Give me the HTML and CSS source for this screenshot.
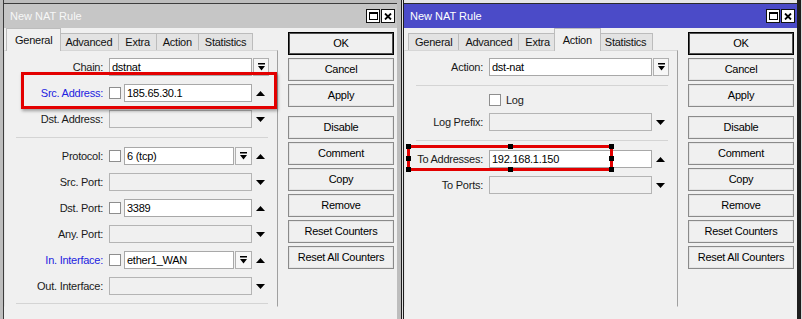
FILE: index.html
```html
<!DOCTYPE html>
<html>
	<head>
		<title>New NAT Rule</title>
		<link rel="stylesheet" href="styles.css">
	</head>
	<body>
		<div class="screen">
			<!-- inactive window: General tab -->
			<div class="win win-left">
				<div class="titlebar">
					<span>New NAT Rule</span>
					<span class="tbtns">
						<span class="tbtn"><svg width="9" height="8" viewBox="0 0 9 8"><rect x=".5" y=".5" width="8" height="7" fill="none" stroke="#000"/><rect width="9" height="2"/></svg></span>
						<span class="tbtn"><svg width="8" height="7" viewBox="0 0 8 7"><path d="M1 .5l6 6M7 .5l-6 6" stroke="#000" stroke-width="1.8"/></svg></span>
					</span>
				</div>
				<div class="win-body">
					<div class="tabbox">
						<div class="tabs">
							<span class="tab active">General</span>
							<span class="tab">Advanced</span>
							<span class="tab">Extra</span>
							<span class="tab">Action</span>
							<span class="tab">Statistics</span>
						</div>
						<div class="panel">
							<div class="row">
								<span class="lbl">Chain:</span>
								<div class="field"><span class="box">dstnat</span></div>
								<span class="arrow"><span class="dd"><svg width="7" height="8" viewBox="0 0 7 8"><path d="M0 0h7v1.5H0zM0 3h7L3.5 7.5z"/></svg></span></span>
							</div>
							<div class="row">
								<span class="lbl blue">Src. Address:</span>
								<div class="field"><span class="check"></span><span class="box">185.65.30.1</span></div>
								<span class="arrow"><svg width="9" height="5" viewBox="0 0 9 5"><path d="M0 5h9L4.5 0z"/></svg></span>
							</div>
							<div class="row">
								<span class="lbl">Dst. Address:</span>
								<div class="field"><span class="box empty"></span></div>
								<span class="arrow"><svg width="9" height="5" viewBox="0 0 9 5"><path d="M0 0h9L4.5 5z"/></svg></span>
							</div>
							<div class="sep"></div>
							<div class="row">
								<span class="lbl">Protocol:</span>
								<div class="field"><span class="check"></span><span class="combo"><span class="box">6 (tcp)</span><span class="dd"><svg width="7" height="8" viewBox="0 0 7 8"><path d="M0 0h7v1.5H0zM0 3h7L3.5 7.5z"/></svg></span></span></div>
								<span class="arrow"><svg width="9" height="5" viewBox="0 0 9 5"><path d="M0 5h9L4.5 0z"/></svg></span>
							</div>
							<div class="row">
								<span class="lbl">Src. Port:</span>
								<div class="field"><span class="box empty"></span></div>
								<span class="arrow"><svg width="9" height="5" viewBox="0 0 9 5"><path d="M0 0h9L4.5 5z"/></svg></span>
							</div>
							<div class="row">
								<span class="lbl">Dst. Port:</span>
								<div class="field"><span class="check"></span><span class="box">3389</span></div>
								<span class="arrow"><svg width="9" height="5" viewBox="0 0 9 5"><path d="M0 5h9L4.5 0z"/></svg></span>
							</div>
							<div class="row">
								<span class="lbl">Any. Port:</span>
								<div class="field"><span class="box empty"></span></div>
								<span class="arrow"><svg width="9" height="5" viewBox="0 0 9 5"><path d="M0 0h9L4.5 5z"/></svg></span>
							</div>
							<div class="row">
								<span class="lbl blue">In. Interface:</span>
								<div class="field"><span class="check"></span><span class="combo"><span class="box">ether1_WAN</span><span class="dd"><svg width="7" height="8" viewBox="0 0 7 8"><path d="M0 0h7v1.5H0zM0 3h7L3.5 7.5z"/></svg></span></span></div>
								<span class="arrow"><svg width="9" height="5" viewBox="0 0 9 5"><path d="M0 5h9L4.5 0z"/></svg></span>
							</div>
							<div class="row">
								<span class="lbl">Out. Interface:</span>
								<div class="field"><span class="box empty"></span></div>
								<span class="arrow"><svg width="9" height="5" viewBox="0 0 9 5"><path d="M0 0h9L4.5 5z"/></svg></span>
							</div>
							<div class="sep"></div>
						</div>
					</div>
					<div class="actions">
						<span class="btn default">OK</span>
						<span class="btn">Cancel</span>
						<span class="btn">Apply</span>
						<span class="btn spaced">Disable</span>
						<span class="btn">Comment</span>
						<span class="btn">Copy</span>
						<span class="btn">Remove</span>
						<span class="btn">Reset Counters</span>
						<span class="btn">Reset All Counters</span>
					</div>
				</div>
				<div class="mark mark-src"></div>
			</div>

			<!-- active window: Action tab -->
			<div class="win win-right">
				<div class="titlebar">
					<span>New NAT Rule</span>
					<span class="tbtns">
						<span class="tbtn"><svg width="9" height="8" viewBox="0 0 9 8"><rect x=".5" y=".5" width="8" height="7" fill="none" stroke="#000"/><rect width="9" height="2"/></svg></span>
						<span class="tbtn"><svg width="8" height="7" viewBox="0 0 8 7"><path d="M1 .5l6 6M7 .5l-6 6" stroke="#000" stroke-width="1.8"/></svg></span>
					</span>
				</div>
				<div class="win-body">
					<div class="tabbox">
						<div class="tabs">
							<span class="tab">General</span>
							<span class="tab">Advanced</span>
							<span class="tab">Extra</span>
							<span class="tab active">Action</span>
							<span class="tab">Statistics</span>
						</div>
						<div class="panel panel-action">
							<div class="row">
								<span class="lbl">Action:</span>
								<div class="field"><span class="box">dst-nat</span></div>
								<span class="arrow"><span class="dd"><svg width="7" height="8" viewBox="0 0 7 8"><path d="M0 0h7v1.5H0zM0 3h7L3.5 7.5z"/></svg></span></span>
							</div>
							<div class="sep"></div>
							<div class="row row-short">
								<span class="lbl"></span>
								<div class="field field-log"><span class="check"></span><span>Log</span></div>
							</div>
							<div class="row">
								<span class="lbl">Log Prefix:</span>
								<div class="field"><span class="box empty"></span></div>
								<span class="arrow"><svg width="9" height="5" viewBox="0 0 9 5"><path d="M0 0h9L4.5 5z"/></svg></span>
							</div>
							<div class="sep"></div>
							<div class="row">
								<span class="lbl">To Addresses:</span>
								<div class="field"><span class="box">192.168.1.150</span></div>
								<span class="arrow"><svg width="9" height="5" viewBox="0 0 9 5"><path d="M0 5h9L4.5 0z"/></svg></span>
							</div>
							<div class="row">
								<span class="lbl">To Ports:</span>
								<div class="field"><span class="box empty"></span></div>
								<span class="arrow"><svg width="9" height="5" viewBox="0 0 9 5"><path d="M0 0h9L4.5 5z"/></svg></span>
							</div>
						</div>
					</div>
					<div class="actions">
						<span class="btn default">OK</span>
						<span class="btn">Cancel</span>
						<span class="btn">Apply</span>
						<span class="btn spaced">Disable</span>
						<span class="btn">Comment</span>
						<span class="btn">Copy</span>
						<span class="btn">Remove</span>
						<span class="btn">Reset Counters</span>
						<span class="btn">Reset All Counters</span>
					</div>
				</div>
				<div class="mark mark-to">
					<span class="grip g-tl"></span><span class="grip g-tm"></span><span class="grip g-tr"></span>
					<span class="grip g-ml"></span><span class="grip g-mr"></span>
					<span class="grip g-bl"></span><span class="grip g-bm"></span><span class="grip g-br"></span>
				</div>
			</div>
		</div>
	</body>
</html>
```

FILE: styles.css
```css
body
{
	margin: 0;
	background: #f0f0f0;
	font: 11px "Liberation Sans", Arial, sans-serif;
	letter-spacing: -0.25px;
	color: #111;
}

.screen
{
	display: flex;
	height: 319px;
	overflow: hidden;
}

/* windows */
.win
{
	position: relative;
	width: 401px;
	height: 319px;
	box-sizing: border-box;
	padding: 4px 4px 0 4px;
	background: #f0f0f0;
}
.win-left
{
	box-shadow: inset 3px 0 #bdbdbd, inset 4px 0 #3c3c3c, inset -4px 0 #bdbdbd, inset 0 3px #bdbdbd, inset 0 4px #3c3c3c;
}
.win-right
{
	padding: 4px 5px 0 3px;
	box-shadow: inset 1px 0 #1e1e1e, inset 2px 0 #e2e2e2, inset 3px 0 #1e1e1e, inset -1px 0 #dcdcdc, inset -5px 0 #1e1e1e, inset 0 3px #e6e6e6, inset 0 4px #2a2a2a;
}

.titlebar
{
	height: 24px;
	display: flex;
	align-items: center;
	justify-content: space-between;
	padding: 0 2px 0 6px;
	font-size: 11px;
	letter-spacing: 0;
	color: #f7f7f7;
	background: #c6c6c6;
}
.win-right .titlebar
{
	background: #4b4bc8;
	color: #fff;
}
.tbtns
{
	display: flex;
	gap: 1px;
}
.tbtn
{
	width: 14px;
	height: 14px;
	box-sizing: border-box;
	border: 1px solid #111;
	background: #fff;
	display: flex;
	align-items: center;
	justify-content: center;
}

.win-body
{
	display: flex;
	gap: 10px;
}

/* tabs */
.tabbox
{
	width: 274px;
}
.tabs
{
	display: flex;
	align-items: flex-end;
	height: 22px;
	padding-left: 4px;
}
.tab
{
	height: 17px;
	line-height: 16px;
	padding: 0 6px;
	margin-right: -1px;
	box-sizing: border-box;
	border: 1px solid #bcbcbc;
	border-bottom: none;
	background: #e3e3e3;
	color: #111;
}
.tab.active
{
	position: relative;
	z-index: 1;
	height: 23px;
	margin: 0 -3px -1px -2px;
	padding: 3px 8px 0;
	background: #f0f0f0;
}

.panel
{
	height: 257px;
	box-sizing: border-box;
	padding-top: 3px;
	border: 1px solid;
	border-color: #d6d6d6 #a0a0a0 #f0f0f0 #e4e4e4;
}

/* form rows */
.row
{
	display: grid;
	grid-template-columns: 104px 1fr 17px;
	align-items: center;
	height: 26px;
	padding-right: 8px;
}
.panel-action .row
{
	grid-template-columns: 84px 1fr 17px;
}
.row-short
{
	height: 18px;
}
.lbl
{
	text-align: right;
	padding-right: 6px;
	white-space: nowrap;
	color: #1a1a1a;
}
.lbl.blue
{
	color: #2222e0;
}
.field
{
	display: flex;
	align-items: center;
	gap: 3px;
	height: 18px;
}
.field-log
{
	gap: 5px;
	color: #1a1a1a;
}
.combo
{
	flex: 1;
	display: flex;
	gap: 1px;
	height: 18px;
}
.box
{
	flex: 1;
	height: 18px;
	box-sizing: border-box;
	padding: 0 2px;
	line-height: 16px;
	border: 1px solid #a8a8a8;
	background: #fff;
	color: #000;
	white-space: nowrap;
	overflow: hidden;
}
.box.empty
{
	background: #f0f0f0;
	border-color: #b4b4b4;
}
.check
{
	width: 12px;
	height: 12px;
	box-sizing: border-box;
	border: 1px solid #8e8e8e;
	background: #fff;
}
.dd
{
	width: 17px;
	height: 18px;
	box-sizing: border-box;
	border: 1px solid #b0b0b0;
	background: #f7f7f7;
	display: flex;
	align-items: center;
	justify-content: center;
}
.arrow
{
	display: flex;
	align-items: center;
	justify-content: center;
	height: 18px;
}
.arrow .dd
{
	width: 16px;
	margin-left: 1px;
}

.sep
{
	margin: 5px 9px 5px 11px;
	border-top: 1px solid #d4d4d4;
}
.row + .sep:last-child
{
	margin-top: 4px;
}

/* buttons */
.actions
{
	width: 106px;
	display: flex;
	flex-direction: column;
	gap: 3px;
	padding-top: 4px;
}
.btn
{
	height: 23px;
	box-sizing: border-box;
	line-height: 21px;
	text-align: center;
	border: 1px solid #8a8a8a;
	box-shadow: inset 0 0 0 1px #e4e4e4;
	background: #f0f0f0;
	color: #000;
	white-space: nowrap;
}
.btn.default
{
	border-color: #000;
	box-shadow: inset 0 0 0 1px #505050;
}
.btn.spaced
{
	margin-top: 6px;
}

/* red annotation marks laid over the dialogs */
.mark
{
	position: absolute;
	box-sizing: border-box;
	border: 3px solid #e30000;
}
.mark-src
{
	left: 21px;
	top: 72px;
	width: 256px;
	height: 37px;
	box-shadow: 1px 2px 3px rgba(0, 0, 0, 0.35);
}
.mark-to
{
	left: 6px;
	top: 145px;
	width: 206px;
	height: 26px;
}
.grip
{
	position: absolute;
	width: 5px;
	height: 5px;
	background: #000;
}
.g-tl, .g-tm, .g-tr { top: -4px; }
.g-bl, .g-bm, .g-br { bottom: -4px; }
.g-ml, .g-mr { top: calc(50% - 2.5px); }
.g-tl, .g-ml, .g-bl { left: -4px; }
.g-tr, .g-mr, .g-br { right: -4px; }
.g-tm, .g-bm { left: calc(50% - 2.5px); }
```
